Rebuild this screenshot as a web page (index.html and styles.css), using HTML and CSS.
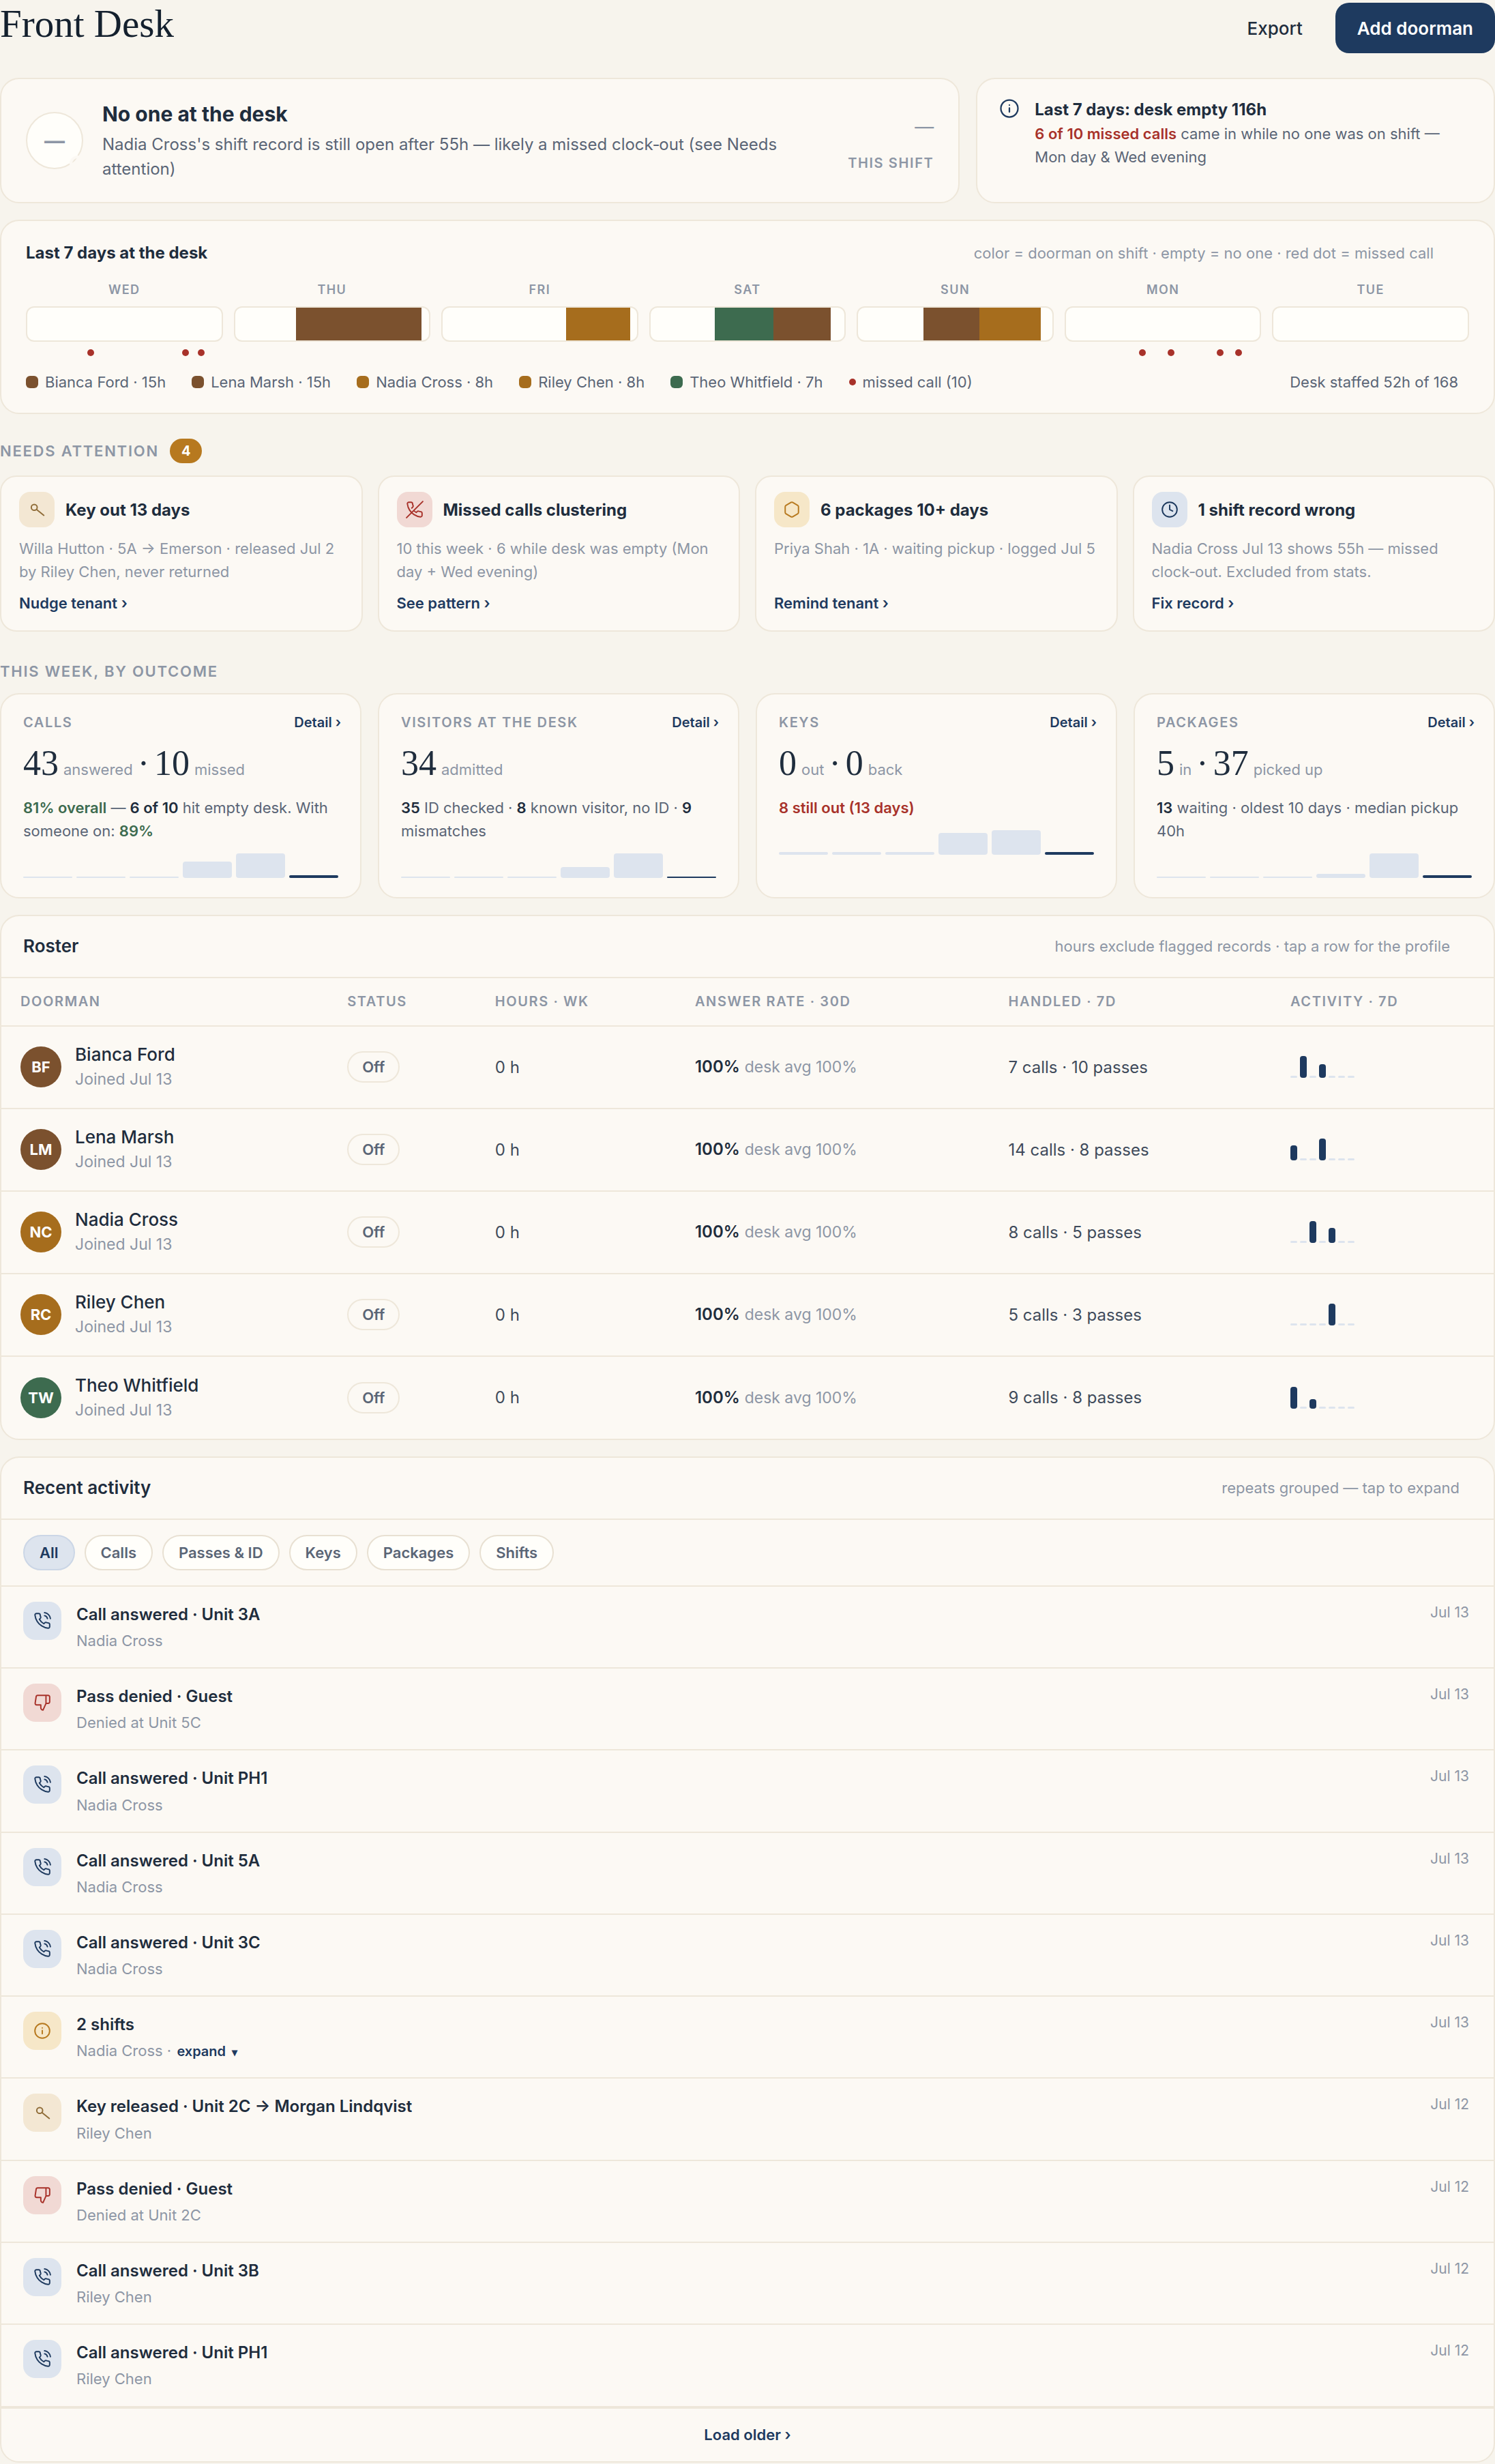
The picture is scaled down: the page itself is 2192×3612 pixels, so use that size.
FILE: index.html
```html
<!DOCTYPE html>
<html lang="en">
    <head>
        <meta charset="UTF-8" />
        <meta name="viewport" content="width=device-width, initial-scale=1.0" />
        <title>Front Desk</title>
        <link rel="stylesheet" href="styles.css">
    </head>
    <body>
        <!-- icon sprite -->
        <svg class="sprite" aria-hidden="true">
            <symbol id="i-info" viewBox="0 0 24 24">
                <circle cx="12" cy="12" r="10" />
                <path d="M12 16v-4.5M12 8h.01" />
            </symbol>
            <symbol id="i-key" viewBox="0 0 24 24">
                <circle cx="8.5" cy="9" r="4" />
                <path d="M11.5 11.8 21.5 19.8" />
            </symbol>
            <symbol id="i-phone-off" viewBox="0 0 24 24">
                <path d="M10.68 13.31a16 16 0 0 0 3.41 2.6l1.27-1.27a2 2 0 0 1 2.11-.45 12.84 12.84 0 0 0 2.81.7 2 2 0 0 1 1.72 2v3a2 2 0 0 1-2.18 2 19.79 19.79 0 0 1-8.63-3.07 19.5 19.5 0 0 1-6-6 19.79 19.79 0 0 1-3.07-8.67A2 2 0 0 1 4.11 2h3a2 2 0 0 1 2 1.72 12.84 12.84 0 0 0 .7 2.81 2 2 0 0 1-.45 2.11L8.09 9.91M23 1 1 23" />
            </symbol>
            <symbol id="i-box" viewBox="0 0 24 24">
                <path d="M21 16V8a2 2 0 0 0-1-1.73l-7-4a2 2 0 0 0-2 0l-7 4A2 2 0 0 0 3 8v8a2 2 0 0 0 1 1.73l7 4a2 2 0 0 0 2 0l7-4A2 2 0 0 0 21 16z" />
            </symbol>
            <symbol id="i-clock" viewBox="0 0 24 24">
                <circle cx="12" cy="12" r="10" />
                <path d="M12 6v6l4 2" />
            </symbol>
            <symbol id="i-call" viewBox="0 0 24 24">
                <path d="M15.05 5A5 5 0 0 1 19 8.95M15.05 1A9 9 0 0 1 23 8.94m-1 7.98v3a2 2 0 0 1-2.18 2 19.79 19.79 0 0 1-8.63-3.07 19.5 19.5 0 0 1-6-6 19.79 19.79 0 0 1-3.07-8.67A2 2 0 0 1 4.11 2h3a2 2 0 0 1 2 1.72 12.84 12.84 0 0 0 .7 2.81 2 2 0 0 1-.45 2.11L8.09 9.91a16 16 0 0 0 6 6l1.27-1.27a2 2 0 0 1 2.11-.45 12.84 12.84 0 0 0 2.81.7A2 2 0 0 1 22 16.92z" />
            </symbol>
            <symbol id="i-denied" viewBox="0 0 24 24">
                <path d="M10 15v4a3 3 0 0 0 3 3l4-9V2H5.72a2 2 0 0 0-2 1.7l-1.38 9a2 2 0 0 0 2 2.3zm7-13h2.67A2.31 2.31 0 0 1 22 4v7a2.31 2.31 0 0 1-2.33 2H17" />
            </symbol>
        </svg>

        <header class="page-header">
            <h1>Front Desk</h1>
            <div class="actions">
                <button class="btn btn-ghost" type="button">Export</button>
                <button class="btn btn-primary" type="button">Add doorman</button>
            </div>
        </header>

        <main class="page">
            <section class="top-row">
                <div class="card now">
                    <div class="now-avatar">—<span class="now-dot"></span></div>
                    <div class="now-body">
                        <h2>No one at the desk</h2>
                        <p>Nadia Cross's shift record is still open after 55h — likely a missed clock‑out (see Needs attention)</p>
                    </div>
                    <div class="now-time">
                        <span class="now-value">—</span>
                        <span class="label">This shift</span>
                    </div>
                </div>
                <div class="card insight">
                    <svg class="icon icon-lg"><use href="#i-info" /></svg>
                    <div>
                        <h3>Last 7 days: desk empty 116h</h3>
                        <p><b class="bad">6 of 10 missed calls</b> came in while no one was on shift — Mon day &amp; Wed evening</p>
                    </div>
                </div>
            </section>

            <section class="card week">
                <div class="week-head">
                    <h3>Last 7 days at the desk</h3>
                    <span class="hint">color = doorman on shift · empty = no one · red dot = missed call</span>
                </div>
                <div class="days">
                    <div class="day">
                        <span class="day-name">Wed</span>
                        <div class="track"></div>
                        <div class="dots">
                            <i style="left: 33%"></i><i style="left: 81%"></i><i style="left: 89%"></i>
                        </div>
                    </div>
                    <div class="day">
                        <span class="day-name">Thu</span>
                        <div class="track"><i class="brown" style="margin-left: 31.5%; width: 64.5%"></i></div>
                        <div class="dots"></div>
                    </div>
                    <div class="day">
                        <span class="day-name">Fri</span>
                        <div class="track"><i class="amber" style="margin-left: 63.5%; width: 33%"></i></div>
                        <div class="dots"></div>
                    </div>
                    <div class="day">
                        <span class="day-name">Sat</span>
                        <div class="track"><i class="green" style="margin-left: 33%; width: 30.5%"></i><i class="brown" style="width: 29.5%"></i></div>
                        <div class="dots"></div>
                    </div>
                    <div class="day">
                        <span class="day-name">Sun</span>
                        <div class="track"><i class="brown" style="margin-left: 33.5%; width: 29%"></i><i class="amber" style="width: 31.5%"></i></div>
                        <div class="dots"></div>
                    </div>
                    <div class="day">
                        <span class="day-name">Mon</span>
                        <div class="track"></div>
                        <div class="dots">
                            <i style="left: 39.5%"></i><i style="left: 54%"></i><i style="left: 79%"></i><i style="left: 88.5%"></i>
                        </div>
                    </div>
                    <div class="day">
                        <span class="day-name">Tue</span>
                        <div class="track"></div>
                        <div class="dots"></div>
                    </div>
                </div>
                <div class="legend">
                    <span class="key"><i class="swatch brown"></i>Bianca Ford · 15h</span>
                    <span class="key"><i class="swatch brown"></i>Lena Marsh · 15h</span>
                    <span class="key"><i class="swatch amber"></i>Nadia Cross · 8h</span>
                    <span class="key"><i class="swatch amber"></i>Riley Chen · 8h</span>
                    <span class="key"><i class="swatch green"></i>Theo Whitfield · 7h</span>
                    <span class="key"><i class="red-dot"></i>missed call (10)</span>
                    <span class="staffed">Desk staffed 52h of 168</span>
                </div>
            </section>

            <section class="attention">
                <h2 class="section-title">Needs attention <span class="count">4</span></h2>
                <div class="attention-grid">
                    <article class="card todo">
                        <div class="todo-head">
                            <span class="tile tan"><svg class="icon"><use href="#i-key" /></svg></span>
                            <h3>Key out 13 days</h3>
                        </div>
                        <p>Willa Hutton · 5A → Emerson · released Jul 2 by Riley Chen, never returned</p>
                        <a class="link" href="#">Nudge tenant ›</a>
                    </article>
                    <article class="card todo">
                        <div class="todo-head">
                            <span class="tile red"><svg class="icon"><use href="#i-phone-off" /></svg></span>
                            <h3>Missed calls clustering</h3>
                        </div>
                        <p>10 this week · 6 while desk was empty (Mon day + Wed evening)</p>
                        <a class="link" href="#">See pattern ›</a>
                    </article>
                    <article class="card todo">
                        <div class="todo-head">
                            <span class="tile yellow"><svg class="icon"><use href="#i-box" /></svg></span>
                            <h3>6 packages 10+ days</h3>
                        </div>
                        <p>Priya Shah · 1A · waiting pickup · logged Jul 5</p>
                        <a class="link" href="#">Remind tenant ›</a>
                    </article>
                    <article class="card todo">
                        <div class="todo-head">
                            <span class="tile blue"><svg class="icon"><use href="#i-clock" /></svg></span>
                            <h3>1 shift record wrong</h3>
                        </div>
                        <p>Nadia Cross Jul 13 shows 55h — missed clock‑out. Excluded from stats.</p>
                        <a class="link" href="#">Fix record ›</a>
                    </article>
                </div>
            </section>

            <section class="outcomes">
                <h2 class="section-title">This week, by outcome</h2>
                <div class="outcome-grid">
                    <article class="card stat">
                        <div class="stat-head">
                            <h3 class="label">Calls</h3>
                            <a class="link" href="#">Detail ›</a>
                        </div>
                        <div class="figure"><span>43</span> <small>answered</small> <span>·</span> <span>10</span> <small>missed</small></div>
                        <p><b class="good">81% overall</b> — <b>6 of 10</b> hit empty desk. With someone on: <b class="good">89%</b></p>
                        <div class="bars">
                            <i style="height: 2px"></i><i style="height: 2px"></i><i style="height: 2px"></i><i style="height: 24px"></i><i style="height: 36px"></i><i class="today" style="height: 4px"></i>
                        </div>
                    </article>
                    <article class="card stat">
                        <div class="stat-head">
                            <h3 class="label">Visitors at the desk</h3>
                            <a class="link" href="#">Detail ›</a>
                        </div>
                        <div class="figure"><span>34</span> <small>admitted</small></div>
                        <p><b>35</b> ID checked · <b>8</b> known visitor, no ID · <b>9</b> mismatches</p>
                        <div class="bars">
                            <i style="height: 2px"></i><i style="height: 2px"></i><i style="height: 2px"></i><i style="height: 16px"></i><i style="height: 36px"></i><i class="today" style="height: 2px"></i>
                        </div>
                    </article>
                    <article class="card stat">
                        <div class="stat-head">
                            <h3 class="label">Keys</h3>
                            <a class="link" href="#">Detail ›</a>
                        </div>
                        <div class="figure"><span>0</span> <small>out</small> <span>·</span> <span>0</span> <small>back</small></div>
                        <p><b class="bad">8 still out (13 days)</b></p>
                        <div class="bars">
                            <i style="height: 4px"></i><i style="height: 4px"></i><i style="height: 4px"></i><i style="height: 32px"></i><i style="height: 36px"></i><i class="today" style="height: 4px"></i>
                        </div>
                    </article>
                    <article class="card stat">
                        <div class="stat-head">
                            <h3 class="label">Packages</h3>
                            <a class="link" href="#">Detail ›</a>
                        </div>
                        <div class="figure"><span>5</span> <small>in</small> <span>·</span> <span>37</span> <small>picked up</small></div>
                        <p><b>13</b> waiting · oldest 10 days · median pickup 40h</p>
                        <div class="bars">
                            <i style="height: 2px"></i><i style="height: 2px"></i><i style="height: 2px"></i><i style="height: 6px"></i><i style="height: 36px"></i><i class="today" style="height: 4px"></i>
                        </div>
                    </article>
                </div>
            </section>

            <section class="card roster">
                <div class="card-head">
                    <h2>Roster</h2>
                    <span class="hint">hours exclude flagged records · tap a row for the profile</span>
                </div>
                <table>
                    <thead>
                        <tr>
                            <th class="c-name">Doorman</th>
                            <th class="c-status">Status</th>
                            <th class="c-hours">Hours · wk</th>
                            <th class="c-rate">Answer rate · 30d</th>
                            <th class="c-handled">Handled · 7d</th>
                            <th>Activity · 7d</th>
                        </tr>
                    </thead>
                    <tbody>
                        <tr>
                            <td><div class="person"><span class="avatar brown">BF</span><div><div class="name">Bianca Ford</div><div class="sub">Joined Jul 13</div></div></div></td>
                            <td><span class="pill">Off</span></td>
                            <td>0 h</td>
                            <td><b>100%</b> <span class="sub">desk avg 100%</span></td>
                            <td>7 calls · 10 passes</td>
                            <td><div class="spark"><i></i><i class="on" style="height: 32px"></i><i></i><i class="on" style="height: 20px"></i><i></i><i></i><i></i></div></td>
                        </tr>
                        <tr>
                            <td><div class="person"><span class="avatar brown">LM</span><div><div class="name">Lena Marsh</div><div class="sub">Joined Jul 13</div></div></div></td>
                            <td><span class="pill">Off</span></td>
                            <td>0 h</td>
                            <td><b>100%</b> <span class="sub">desk avg 100%</span></td>
                            <td>14 calls · 8 passes</td>
                            <td><div class="spark"><i class="on" style="height: 22px"></i><i></i><i></i><i class="on" style="height: 32px"></i><i></i><i></i><i></i></div></td>
                        </tr>
                        <tr>
                            <td><div class="person"><span class="avatar amber">NC</span><div><div class="name">Nadia Cross</div><div class="sub">Joined Jul 13</div></div></div></td>
                            <td><span class="pill">Off</span></td>
                            <td>0 h</td>
                            <td><b>100%</b> <span class="sub">desk avg 100%</span></td>
                            <td>8 calls · 5 passes</td>
                            <td><div class="spark"><i></i><i></i><i class="on" style="height: 32px"></i><i></i><i class="on" style="height: 22px"></i><i></i><i></i></div></td>
                        </tr>
                        <tr>
                            <td><div class="person"><span class="avatar amber">RC</span><div><div class="name">Riley Chen</div><div class="sub">Joined Jul 13</div></div></div></td>
                            <td><span class="pill">Off</span></td>
                            <td>0 h</td>
                            <td><b>100%</b> <span class="sub">desk avg 100%</span></td>
                            <td>5 calls · 3 passes</td>
                            <td><div class="spark"><i></i><i></i><i></i><i></i><i class="on" style="height: 32px"></i><i></i><i></i></div></td>
                        </tr>
                        <tr>
                            <td><div class="person"><span class="avatar green">TW</span><div><div class="name">Theo Whitfield</div><div class="sub">Joined Jul 13</div></div></div></td>
                            <td><span class="pill">Off</span></td>
                            <td>0 h</td>
                            <td><b>100%</b> <span class="sub">desk avg 100%</span></td>
                            <td>9 calls · 8 passes</td>
                            <td><div class="spark"><i class="on" style="height: 32px"></i><i></i><i class="on" style="height: 14px"></i><i></i><i></i><i></i><i></i></div></td>
                        </tr>
                    </tbody>
                </table>
            </section>

            <section class="card activity">
                <div class="card-head">
                    <h2>Recent activity</h2>
                    <span class="hint">repeats grouped — tap to expand</span>
                </div>
                <div class="filters">
                    <button class="chip active" type="button">All</button>
                    <button class="chip" type="button">Calls</button>
                    <button class="chip" type="button">Passes &amp; ID</button>
                    <button class="chip" type="button">Keys</button>
                    <button class="chip" type="button">Packages</button>
                    <button class="chip" type="button">Shifts</button>
                </div>
                <ul class="feed">
                    <li>
                        <span class="tile blue"><svg class="icon"><use href="#i-call" /></svg></span>
                        <div class="event"><h3>Call answered · Unit 3A</h3><p>Nadia Cross</p></div>
                        <time>Jul 13</time>
                    </li>
                    <li>
                        <span class="tile red"><svg class="icon"><use href="#i-denied" /></svg></span>
                        <div class="event"><h3>Pass denied · Guest</h3><p>Denied at Unit 5C</p></div>
                        <time>Jul 13</time>
                    </li>
                    <li>
                        <span class="tile blue"><svg class="icon"><use href="#i-call" /></svg></span>
                        <div class="event"><h3>Call answered · Unit PH1</h3><p>Nadia Cross</p></div>
                        <time>Jul 13</time>
                    </li>
                    <li>
                        <span class="tile blue"><svg class="icon"><use href="#i-call" /></svg></span>
                        <div class="event"><h3>Call answered · Unit 5A</h3><p>Nadia Cross</p></div>
                        <time>Jul 13</time>
                    </li>
                    <li>
                        <span class="tile blue"><svg class="icon"><use href="#i-call" /></svg></span>
                        <div class="event"><h3>Call answered · Unit 3C</h3><p>Nadia Cross</p></div>
                        <time>Jul 13</time>
                    </li>
                    <li>
                        <span class="tile yellow"><svg class="icon"><use href="#i-info" /></svg></span>
                        <div class="event"><h3>2 shifts</h3><p>Nadia Cross · <button class="expand" type="button">expand <span class="caret">▾</span></button></p></div>
                        <time>Jul 13</time>
                    </li>
                    <li>
                        <span class="tile tan"><svg class="icon"><use href="#i-key" /></svg></span>
                        <div class="event"><h3>Key released · Unit 2C → Morgan Lindqvist</h3><p>Riley Chen</p></div>
                        <time>Jul 12</time>
                    </li>
                    <li>
                        <span class="tile red"><svg class="icon"><use href="#i-denied" /></svg></span>
                        <div class="event"><h3>Pass denied · Guest</h3><p>Denied at Unit 2C</p></div>
                        <time>Jul 12</time>
                    </li>
                    <li>
                        <span class="tile blue"><svg class="icon"><use href="#i-call" /></svg></span>
                        <div class="event"><h3>Call answered · Unit 3B</h3><p>Riley Chen</p></div>
                        <time>Jul 12</time>
                    </li>
                    <li>
                        <span class="tile blue"><svg class="icon"><use href="#i-call" /></svg></span>
                        <div class="event"><h3>Call answered · Unit PH1</h3><p>Riley Chen</p></div>
                        <time>Jul 12</time>
                    </li>
                </ul>
                <div class="more"><button class="link" type="button">Load older ›</button></div>
            </section>
        </main>
    </body>
</html>
```

FILE: styles.css
```css
:root {
    --bg: #f7f4ed;
    --card: #fcf9f4;
    --paper: #fffefa;
    --line: #eee7da;
    --ink: #1f2d3d;
    --body: #5a6576;
    --muted: #8d96a5;
    --navy: #1e3a5f;
    --red: #a8322a;
    --green: #3d6b4f;
    --amber: #a66d1d;
    --brown: #7b512e;
}
* {
    box-sizing: border-box;
    margin: 0;
    padding: 0;
}
body {
    background-color: var(--bg);
    color: var(--ink);
    font-family: Inter, "Liberation Sans", sans-serif;
    font-size: 24px;
    line-height: 1.55;
}
button {
    font-family: inherit;
    border: none;
    background: none;
    cursor: pointer;
}
h2,
h3,
b {
    font-weight: 600;
}
h3 {
    font-size: 24px;
}
.sprite {
    display: none;
}
.icon {
    width: 26px;
    height: 26px;
    fill: none;
    stroke: currentColor;
    stroke-width: 1.8;
    stroke-linecap: round;
    stroke-linejoin: round;
}
.icon-lg {
    width: 30px;
    height: 30px;
}
.card {
    background-color: var(--card);
    border: 2px solid var(--line);
    border-radius: 28px;
}
.label,
.section-title,
.day-name,
th {
    color: var(--muted);
    font-weight: 600;
    letter-spacing: 0.08em;
    text-transform: uppercase;
}
.label,
th {
    font-size: 20px;
}
.hint {
    color: var(--muted);
    font-size: 22px;
}
.link {
    color: var(--navy);
    font-size: 22px;
    font-weight: 600;
    text-decoration: none;
}
.good {
    color: var(--green);
}
.bad {
    color: var(--red);
}
.brown {
    background-color: var(--brown);
}
.amber {
    background-color: var(--amber);
}
.green {
    background-color: var(--green);
}

/* header */
.page-header {
    display: flex;
    justify-content: space-between;
    align-items: flex-start;
    height: 114px;
}
.page-header h1 {
    color: #14202e;
    font-family: "Liberation Serif", serif;
    font-size: 57px;
    font-weight: 400;
    line-height: 70px;
}
.actions {
    display: flex;
    gap: 24px;
    padding-top: 4px;
}
.btn {
    height: 74px;
    padding: 0 24px;
    border-radius: 20px;
    color: var(--ink);
    font-size: 26px;
    font-weight: 500;
}
.btn-primary {
    padding: 0 32px;
    background-color: var(--navy);
    color: #fff;
    font-weight: 600;
}

.page {
    display: flex;
    flex-direction: column;
    gap: 24px;
}

/* who is at the desk now */
.top-row {
    display: grid;
    grid-template-columns: 185fr 100fr;
    gap: 24px;
}
.now {
    display: flex;
    align-items: center;
    gap: 28px;
    padding: 30px 36px;
}
.now-avatar {
    position: relative;
    display: flex;
    flex: none;
    align-items: center;
    justify-content: center;
    width: 84px;
    height: 84px;
    border: 2px solid var(--line);
    border-radius: 50%;
    background-color: var(--paper);
    color: var(--muted);
    font-size: 30px;
    font-weight: 700;
}
.now-dot {
    position: absolute;
    right: -6px;
    bottom: -6px;
    width: 24px;
    height: 24px;
    border: 4px solid var(--card);
    border-radius: 50%;
}
.now-body {
    flex: 1;
}
.now h2,
.insight h3,
.week h3,
.todo h3 {
    font-weight: 700;
}
.now h2 {
    font-size: 30px;
    line-height: 42px;
}
.now p {
    margin-top: 6px;
    color: var(--body);
    line-height: 36px;
}
.now-time {
    display: flex;
    flex-direction: column;
    align-items: flex-end;
    gap: 18px;
    padding: 8px 0 0 60px;
    color: var(--muted);
}
.now-value {
    font-size: 28px;
    line-height: 40px;
}
.insight {
    display: flex;
    align-items: flex-start;
    gap: 22px;
    padding: 26px 32px;
}
.insight .icon {
    flex: none;
    margin-top: 2px;
    color: var(--navy);
}
.insight p {
    color: var(--body);
    font-size: 22px;
}

/* week strip */
.week {
    padding: 28px 36px;
}
.week-head {
    display: flex;
    justify-content: space-between;
    align-items: center;
    padding-right: 52px;
}
.days {
    display: grid;
    grid-template-columns: repeat(7, 1fr);
    gap: 16px;
    margin-top: 22px;
}
.day-name {
    display: block;
    margin-bottom: 10px;
    font-size: 18px;
    line-height: 28px;
    text-align: center;
}
.track {
    display: flex;
    height: 52px;
    overflow: hidden;
    border: 2px solid var(--line);
    border-radius: 12px;
    background-color: var(--paper);
}
.dots {
    position: relative;
    height: 22px;
    margin-top: 4px;
}
/* one dot per missed call, left = time of day */
.dots i {
    position: absolute;
    top: 7px;
    width: 10px;
    height: 10px;
    margin-left: -5px;
    border-radius: 50%;
    background-color: var(--red);
}
.legend {
    display: flex;
    align-items: center;
    gap: 38px;
    margin-top: 16px;
    padding-right: 16px;
    color: var(--body);
    font-size: 22px;
}
.key {
    display: flex;
    align-items: center;
    gap: 10px;
}
.swatch {
    width: 18px;
    height: 18px;
    border-radius: 6px;
}
.red-dot {
    width: 10px;
    height: 10px;
    border-radius: 50%;
    background-color: var(--red);
}
.staffed {
    margin-left: auto;
}

/* needs attention */
.section-title {
    display: flex;
    align-items: center;
    gap: 16px;
    min-height: 36px;
    font-size: 22px;
}
.attention {
    padding-top: 12px;
}
.attention-grid {
    display: grid;
    grid-template-columns: repeat(4, 1fr);
    gap: 22px;
    margin-top: 18px;
}
.count {
    padding: 0 17px;
    border-radius: 18px;
    background-color: #b7791f;
    color: #fff;
    font-size: 20px;
    font-weight: 700;
    letter-spacing: 0;
    line-height: 36px;
}
.todo {
    display: flex;
    flex-direction: column;
    align-items: flex-start;
    padding: 22px 26px;
    border-radius: 24px;
}
.todo-head {
    display: flex;
    align-items: center;
    gap: 16px;
}
.tile {
    display: flex;
    flex: none;
    align-items: center;
    justify-content: center;
    width: 52px;
    height: 52px;
    border-radius: 16px;
}
.tile.tan {
    background-color: #f3e7d3;
    color: #8f6c38;
}
.tile.red {
    background-color: #f1d9d4;
    color: var(--red);
}
.tile.yellow {
    background-color: #f6e7c8;
    color: #b7791f;
}
.tile.blue {
    background-color: #dde4ee;
    color: var(--navy);
}
.todo p {
    flex: 1;
    margin: 14px 0 12px;
    color: var(--muted);
    font-size: 22px;
}

/* outcome cards */
.outcomes {
    padding-top: 16px;
}
.outcome-grid {
    display: grid;
    grid-template-columns: repeat(4, 1fr);
    gap: 24px;
    margin-top: 14px;
}
.stat {
    padding: 26px 32px 28px;
}
.stat-head {
    display: flex;
    justify-content: space-between;
    align-items: center;
}
.stat-head .link {
    margin-right: -4px;
    font-size: 20px;
}
.figure {
    display: flex;
    align-items: baseline;
    gap: 7px;
    margin-top: 14px;
    font-family: "Liberation Serif", serif;
    font-size: 52px;
    line-height: 60px;
}
.figure small {
    color: var(--muted);
    font-family: Inter, "Liberation Sans", sans-serif;
    font-size: 22px;
    line-height: 34px;
}
.stat p {
    margin-top: 18px;
    color: var(--body);
    font-size: 22px;
}
.stat b:not([class]) {
    color: var(--ink);
}
.bars {
    display: flex;
    align-items: flex-end;
    gap: 6px;
    height: 36px;
    margin-top: 16px;
}
.bars i {
    flex: 1;
    border-radius: 4px;
    background-color: #dde4ee;
}
.bars .today {
    background-color: var(--navy);
}

/* roster */
.card-head {
    display: flex;
    justify-content: space-between;
    align-items: center;
    height: 91px;
    padding: 0 32px;
    border-bottom: 2px solid var(--line);
}
.card-head h2 {
    font-size: 26px;
}
.roster .hint {
    padding-right: 32px;
}
.activity .hint {
    padding-right: 18px;
}
table {
    width: 100%;
    border-collapse: collapse;
    table-layout: fixed;
}
th {
    height: 70px;
    padding: 0 28px;
    border-bottom: 2px solid var(--line);
    text-align: left;
}
.c-name {
    width: 21.9%;
}
.c-status {
    width: 9.9%;
}
.c-hours {
    width: 13.4%;
}
.c-rate {
    width: 21%;
}
.c-handled {
    width: 18.9%;
}
td {
    height: 121px;
    padding: 0 28px;
    border-bottom: 2px solid var(--line);
    color: #3f4b5b;
}
td b {
    color: var(--ink);
}
tbody tr:last-child td {
    border-bottom: none;
}
.person {
    display: flex;
    align-items: center;
    gap: 20px;
}
.avatar {
    width: 60px;
    height: 60px;
    border-radius: 50%;
    color: #fff;
    font-size: 22px;
    font-weight: 700;
    line-height: 60px;
    text-align: center;
}
.name {
    color: var(--ink);
    font-size: 26px;
    font-weight: 500;
    line-height: 38px;
}
.sub {
    color: var(--muted);
    font-size: 23px;
}
.pill {
    display: inline-block;
    padding: 0 20px;
    border: 2px solid var(--line);
    border-radius: 24px;
    color: var(--body);
    font-size: 22px;
    font-weight: 600;
    line-height: 42px;
}
.spark {
    display: flex;
    align-items: flex-end;
    gap: 4px;
    height: 32px;
}
.spark i {
    width: 10px;
    height: 3px;
    border-radius: 2px;
    background-color: #dde4ee;
}
.spark .on {
    border-radius: 4px;
    background-color: var(--navy);
}

/* activity feed */
.filters {
    display: flex;
    gap: 14px;
    padding: 22px 32px;
    border-bottom: 2px solid var(--line);
}
.chip {
    height: 52px;
    padding: 0 22px;
    border: 2px solid #e8e0d2;
    border-radius: 26px;
    background-color: var(--paper);
    color: var(--body);
    font-size: 22px;
    font-weight: 600;
}
.chip.active {
    border-color: #cbd6e6;
    background-color: #dde4ee;
    color: var(--navy);
}
.feed {
    list-style-type: none;
}
.feed li {
    display: flex;
    gap: 22px;
    padding: 22px 36px 22px 32px;
    border-bottom: 2px solid var(--line);
}
.feed .tile {
    width: 56px;
    height: 56px;
    border-radius: 18px;
}
.event {
    flex: 1;
}
.event p {
    margin-top: 3px;
    color: var(--muted);
    font-size: 22px;
}
.expand {
    margin-left: 2px;
    color: var(--navy);
    font-size: 20px;
    font-weight: 600;
}
.caret {
    margin-left: 4px;
    font-size: 16px;
}
time {
    color: var(--muted);
    font-size: 21px;
}
.more {
    display: flex;
    align-items: center;
    justify-content: center;
    height: 79px;
    border-top: 2px solid var(--line);
}
```
